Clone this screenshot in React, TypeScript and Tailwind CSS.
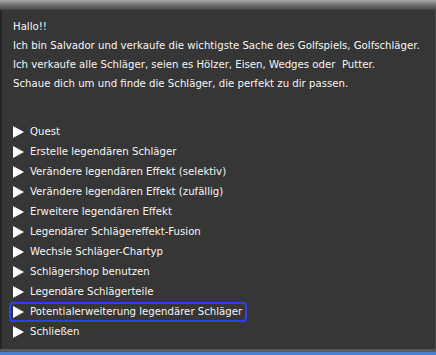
import React from "react";

const items = [
  "Quest",
  "Erstelle legendären Schläger",
  "Verändere legendären Effekt (selektiv)",
  "Verändere legendären Effekt (zufällig)",
  "Erweitere legendären Effekt",
  "Legendärer Schlägereffekt-Fusion",
  "Wechsle Schläger-Chartyp",
  "Schlägershop benutzen",
  "Legendäre Schlägerteile",
  "Potentialerweiterung legendärer Schläger",
  "Schließen",
];

function Arrow() {
  return (
    <svg width="11" height="12" viewBox="0 0 11 12" className="shrink-0">
      <polygon points="0,0 11,6 0,12" fill="#ffffff" />
    </svg>
  );
}

export default function App() {
  return (
    <div
      className="w-[436px] h-[355px] bg-[#363636] flex flex-col overflow-hidden text-[#f5f5f5]"
      style={{ fontFamily: "'DejaVu Sans Condensed', 'Liberation Sans', sans-serif" }}
    >
      <div className="h-[10px] shrink-0 bg-gradient-to-b from-[#a8a8a8] via-[#707070] to-[#454545]" />
      <div className="flex-1 flex flex-col border-l-2 border-r border-l-[#262626] border-r-[#4a4a4a]">
        <div className="pl-[11px] pt-[7px] text-[11.3px] leading-[19px] whitespace-nowrap">
          <p>Hallo!!</p>
          <p>Ich bin Salvador und verkaufe die wichtigste Sache des Golfspiels, Golfschläger.</p>
          <p>Ich verkaufe alle Schläger, seien es Hölzer, Eisen, Wedges oder&nbsp; Putter.</p>
          <p>Schaue dich um und finde die Schläger, die perfekt zu dir passen.</p>
        </div>
        <ul className="mt-[29px] flex flex-col text-[11.3px] whitespace-nowrap">
          {items.map((t, i) => (
            <li key={t} className="flex">
              <div
                className={
                  "ml-[7px] h-[20px] flex items-center gap-[6px] pl-[2px] pr-[3px] border-2 rounded-[4px] " +
                  (i === 9 ? "border-[#2b3dff]" : "border-transparent")
                }
              >
                <Arrow />
                <span>{t}</span>
              </div>
            </li>
          ))}
        </ul>
      </div>
      <div className="h-[3px] shrink-0 bg-[#5a5a5a]" />
      <div className="h-[3px] shrink-0 bg-[#4a7fd0]" />
    </div>
  );
}
